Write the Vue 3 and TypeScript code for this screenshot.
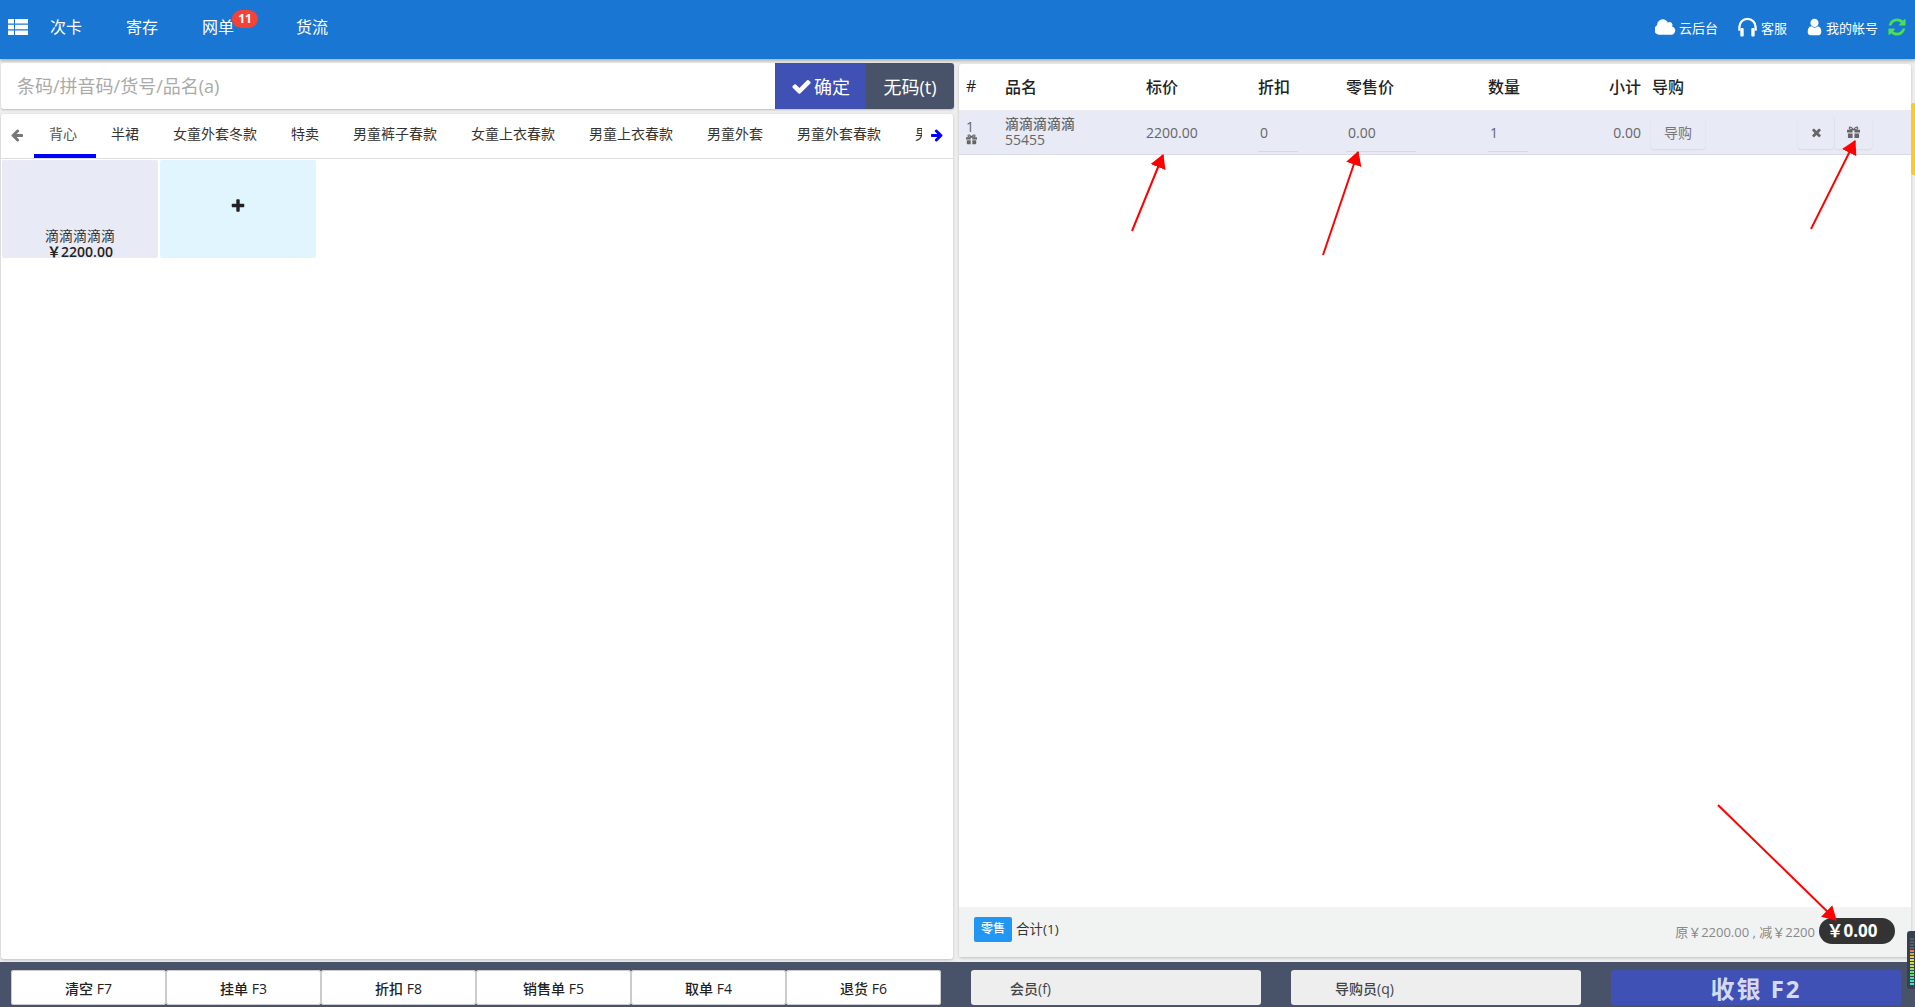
<script setup lang="ts">
const icons: Record<string, { box: string; d: string }> = {
  check: { box: '0 0 1792 1792', d: 'M1671 566q0 40-28 68l-724 724-136 136q-28 28-68 28t-68-28l-136-136-362-362q-28-28-28-68t28-68l136-136q28-28 68-28t68 28l294 295 656-657q28-28 68-28t68 28l136 136q28 28 28 68z' },
  times: { box: '0 0 1792 1792', d: 'M1490 1322q0 40-28 68l-136 136q-28 28-68 28t-68-28l-294-294-294 294q-28 28-68 28t-68-28l-136-136q-28-28-28-68t28-68l294-294-294-294q-28-28-28-68t28-68l136-136q28-28 68-28t68 28l294 294 294-294q28-28 68-28t68 28l136 136q28 28 28 68t-28 68l-294 294 294 294q28 28 28 68z' },
  plus: { box: '0 0 1792 1792', d: 'M1600 736v192q0 40-28 68t-68 28h-416v416q0 40-28 68t-68 28h-192q-40 0-68-28t-28-68v-416h-416q-40 0-68-28t-28-68v-192q0-40 28-68t68-28h416v-416q0-40 28-68t68-28h192q40 0 68 28t28 68v416h416q40 0 68 28t28 68z' },
  left: { box: '0 0 1792 1792', d: 'M1664 896v128q0 53-32.500 90.500t-84.500 37.500h-704l293 294q38 36 38 90t-38 90l-75 76q-37 37-90 37-52 0-91-37l-651-652q-37-37-37-90 0-52 37-91l651-650q38-38 91-38 52 0 90 38l75 74q38 38 38 91t-38 91l-293 293h704q52 0 84.500 37.500t32.500 90.500z' },
  right: { box: '0 0 1792 1792', d: 'M1600 960q0 54-37 91l-651 651q-39 37-91 37-51 0-90-37l-75-75q-38-38-38-91t38-91l293-293h-704q-52 0-84.500-37.500t-32.500-90.500v-128q0-53 32.500-90.500t84.500-37.500h704l-293-294q-38-36-38-90t38-90l75-75q38-38 90-38 53 0 91 38l651 651q37 35 37 90z' },
  user: { box: '0 0 1792 1792', d: 'M1536 1399q0 109-62.500 187t-150.500 78h-854q-88 0-150.500-78t-62.500-187q0-85 8.500-160.500t31.500-152 58.500-131 94-89 134.500-34.500q131 128 313 128t313-128q76 0 134.500 34.500t94 89 58.500 131 31.500 152 8.500 160.500zm-256-887q0 159-112.500 271.500t-271.500 112.500-271.500-112.500-112.500-271.500 112.500-271.500 271.500-112.500 271.500 112.500 112.500 271.500z' },
  cloud: { box: '0 0 1920 1792', d: 'M1856 1216q0 159-112.500 271.500t-271.500 112.500h-1088q-185 0-316.500-131.500t-131.500-316.500q0-132 71-241.500t187-163.500q-2-28-2-43 0-212 150-362t362-150q158 0 286.500 88t187.500 230q70-62 166-62 106 0 181 75t75 181q0 75-41 138 129 30 213 134.500t84 239.500z' },
  refresh: { box: '0 0 1792 1792', d: 'M1639 1056q0 5-1 7-64 268-268 434.500t-478 166.500q-146 0-282.500-55t-243.500-157l-129 129q-19 19-45 19t-45-19-19-45v-448q0-26 19-45t45-19h448q26 0 45 19t19 45-19 45l-137 137q71 66 161 102t187 36q134 0 250-65t186-179q11-17 53-117 8-23 30-23h192q13 0 22.500 9.500t9.500 22.500zm25-800v448q0 26-19 45t-45 19h-448q-26 0-45-19t-19-45 19-45l138-138q-148-137-349-137-134 0-250 65t-186 179q-11 17-53 117-8 23-30 23h-199q-13 0-22.500-9.500t-9.500-22.500v-7q65-268 270-434.500t480-166.500q146 0 284 55.500t245 156.500l130-129q19-19 45-19t45 19 19 45z' },
}
const giftBody = 'M0 4h6v3H0zM8 4h6v3H8zM1 8h5v5H2a1 1 0 0 1-1-1zM8 8h5v4a1 1 0 0 1-1 1H8z'
const giftBow = 'M7 4C5 1 3 .5 2.500 2S4 4 7 4C10 4 12 3.500 11.500 2S9 1 7 4z'
const tabs = ['半裙', '女童外套冬款', '特卖', '男童裤子春款', '女童上衣春款', '男童上衣春款', '男童外套', '男童外套春款', '男童裤子']
const fnKeys = ['清空 F7', '挂单 F3', '折扣 F8', '销售单 F5', '取单 F4', '退货 F6']
const arrows = [
  { x1: 1132, y1: 231, x2: 1163, y2: 155 },
  { x1: 1323, y1: 255, x2: 1358, y2: 152 },
  { x1: 1811, y1: 229, x2: 1855, y2: 141 },
  { x1: 1718, y1: 805, x2: 1836, y2: 920 },
]
const meter = ['#555b66', '#555b66', '#555b66', '#5a606b', '#e8843a', '#e8a03a', '#e8c83a', '#e0dc3a', '#d0e040', '#b8e04a', '#98e05a', '#78e06a', '#58e08a', '#48e0a8', '#40e0c0', '#40e0c8']
</script>

<template>
  <div class="pos">
    <header class="topbar">
      <svg class="menu-icon" viewBox="0 0 20 16"><path d="M0 0h6v4.500H0zM7 0h13v4.500H7zM0 5.800h6v4.400H0zM7 5.800h13v4.400H7zM0 11.500h6V16H0zM7 11.500h13V16H7z" /></svg>
      <nav class="nav">
        <a class="nav-item">次卡</a>
        <a class="nav-item">寄存</a>
        <a class="nav-item with-badge">网单<span class="badge">11</span></a>
        <a class="nav-item">货流</a>
      </nav>
      <div class="tools">
        <span class="tool"><svg class="ti-cloud" :viewBox="icons.cloud.box"><path :d="icons.cloud.d" /></svg>云后台</span>
        <span class="tool"><svg class="ti-head" viewBox="0 0 22 20"><path class="phones" d="M2.500 14V10a8.500 8.500 0 0 1 17 0v4" /><rect x="3.500" y="11" width="3.500" height="9" rx="1" /><rect x="15" y="11" width="3.500" height="9" rx="1" /></svg>客服</span>
        <span class="tool"><svg class="ti-user" :viewBox="icons.user.box"><path :d="icons.user.d" /></svg>我的帐号</span>
        <svg class="ti-sync" :viewBox="icons.refresh.box"><path :d="icons.refresh.d" /></svg>
      </div>
    </header>

    <main class="main">
      <section class="left">
        <div class="search">
          <div class="search-input">条码/拼音码/货号/品名(a)</div>
          <button class="btn-ok"><svg :viewBox="icons.check.box"><path :d="icons.check.d" /></svg>确定</button>
          <button class="btn-nocode">无码(t)</button>
        </div>
        <div class="catalog">
          <div class="tabs">
            <svg class="tab-prev" :viewBox="icons.left.box"><path :d="icons.left.d" /></svg>
            <div class="tab-strip">
              <span class="tab active">背心</span>
              <span v-for="t in tabs" :key="t" class="tab">{{ t }}</span>
            </div>
            <svg class="tab-next" :viewBox="icons.right.box"><path :d="icons.right.d" /></svg>
          </div>
          <div class="goods">
            <div class="good">
              <span class="good-name">滴滴滴滴滴</span>
              <span class="good-price">￥2200.00</span>
            </div>
            <div class="good add"><svg :viewBox="icons.plus.box"><path :d="icons.plus.d" /></svg></div>
          </div>
        </div>
      </section>

      <section class="right">
        <div class="cart-row cart-head">
          <span>#</span><span>品名</span><span>标价</span><span>折扣</span><span>零售价</span><span>数量</span><span class="r">小计</span><span class="guide-h">导购</span><span></span>
        </div>
        <div class="cart-row cart-item">
          <span class="no">1<svg viewBox="0 0 14 14"><path :d="giftBody" /><path class="bow" :d="giftBow" /></svg></span>
          <span class="name">滴滴滴滴滴<br />55455</span>
          <span>2200.00</span>
          <span class="field w40">0</span>
          <span class="field w70">0.00</span>
          <span class="field w40">1</span>
          <span class="r">0.00</span>
          <span class="guide"><button class="chip guide-btn">导购</button></span>
          <span class="acts">
            <button class="chip act act-x"><svg :viewBox="icons.times.box"><path :d="icons.times.d" /></svg></button>
            <button class="chip act"><svg viewBox="0 0 14 14"><path :d="giftBody" /><path class="bow" :d="giftBow" /></svg></button>
          </span>
        </div>
        <div class="cart-space"></div>
        <div class="summary">
          <span class="tag">零售</span>
          <span class="count">合计(1)</span>
          <span class="calc">原￥2200.00 , 减￥2200</span>
          <span class="total">￥0.00</span>
        </div>
      </section>
    </main>

    <footer class="bottom">
      <div class="fn-group">
        <button v-for="k in fnKeys" :key="k" class="fn">{{ k }}</button>
      </div>
      <button class="pick pick-member">会员(f)</button>
      <button class="pick pick-guide">导购员(q)</button>
      <button class="pay">收银 F2</button>
    </footer>

    <div class="side-tab"></div>
    <div class="meter"><i v-for="(c, i) in meter" :key="i" :style="{ background: c }"></i></div>

    <svg class="marks" viewBox="0 0 1915 1007">
      <defs>
        <marker id="head" markerWidth="7" markerHeight="8" refX="6.500" refY="4" orient="auto" markerUnits="strokeWidth">
          <path d="M0 0L7 4L0 8z" fill="#f00" />
        </marker>
      </defs>
      <line v-for="(a, i) in arrows" :key="i" :x1="a.x1" :y1="a.y1" :x2="a.x2" :y2="a.y2" stroke="#f00" stroke-width="2" marker-end="url(#head)" />
    </svg>
  </div>
</template>

<style>
html, body { margin: 0; background: #eee; }
</style>

<style scoped>
.pos {
  position: relative;
  width: 1915px;
  height: 1007px;
  display: flex;
  flex-direction: column;
  overflow: hidden;
  background: #eee;
  color: #333;
  font-family: "Open Sans", "Noto Sans CJK SC", sans-serif;
  font-size: 14px;
}
button { font-family: inherit; border: 0; padding: 0; }
svg { fill: currentColor; display: block; }

.topbar {
  flex: 0 0 59px;
  box-sizing: border-box;
  display: flex;
  align-items: center;
  padding: 0 8px 5px 8px;
  background: #1976d2;
  color: #fff;
  box-shadow: 0 2px 3px rgba(0,0,0,.25);
  z-index: 2;
}
.menu-icon { width: 20px; height: 16px; }
.nav { display: flex; margin-left: 22px; }
.nav-item { position: relative; width: 76px; font-size: 16px; line-height: 24px; }
.nav-item.with-badge { width: 94px; }
.badge {
  position: absolute;
  left: 30px;
  top: -5px;
  width: 26px;
  height: 18px;
  border-radius: 9px;
  background: #f44336;
  font-size: 12px;
  font-weight: 700;
  line-height: 17px;
  text-align: center;
}
.tools { margin-left: auto; display: flex; align-items: center; font-size: 13px; }
.tool { display: flex; align-items: center; margin-right: 18px; }
.tool:first-child { margin-right: 19px; }
.ti-cloud { width: 21px; height: 20px; margin-right: 3px; }
.ti-head { width: 21px; height: 20px; margin-right: 3px; }
.phones { fill: none; stroke: #fff; stroke-width: 2.400; }
.ti-user { width: 19px; height: 20px; margin-right: 2px; }
.tool:nth-child(3) { margin-right: 9px; }
.ti-sync { width: 20px; height: 20px; color: #4ae24a; }

.main { flex: 1; min-height: 0; display: flex; gap: 5px; padding: 4px 4px 0 1px; }
.left { width: 953px; display: flex; flex-direction: column; }
.search {
  flex: 0 0 46px;
  display: flex;
  background: #fff;
  border-radius: 3px;
  overflow: hidden;
  box-shadow: 0 1px 2px rgba(0,0,0,.2);
}
.search-input { flex: 1; padding-left: 16px; font-size: 18px; line-height: 47px; color: #aaa; }
.btn-ok, .btn-nocode { height: 46px; color: #fff; font-size: 18px; display: flex; align-items: center; justify-content: center; }
.btn-ok { width: 91px; background: #3f51b5; }
.btn-ok svg { width: 21px; height: 21px; margin-right: 2px; }
.btn-nocode { width: 88px; background: #485269; }
.catalog {
  flex: 1;
  margin: 5px 1px 3px 0;
  background: #fff;
  border-radius: 3px;
  box-shadow: 0 1px 3px rgba(0,0,0,.2);
}
.tabs { position: relative; height: 44px; display: flex; align-items: stretch; border-bottom: 1px solid #ddd; }
.tab-prev { position: absolute; left: 9px; top: 14px; width: 14px; height: 14px; color: #777; }
.tab-next { position: absolute; right: 9px; top: 14px; width: 14px; height: 14px; color: #00f; }
.tab-strip { margin-left: 33px; width: 888px; display: flex; overflow: hidden; }
.tab { flex: none; padding: 0 19px 0 15px; font-size: 14px; line-height: 40px; height: 44px; box-sizing: border-box; white-space: nowrap; color: #333; }
.tab.active { color: #555; border-bottom: 4px solid #00f; }
.goods { display: flex; gap: 2px; padding: 1px 1px; }
.good {
  width: 156px;
  height: 98px;
  background: #e8eaf6;
  border-radius: 2px;
  display: flex;
  flex-direction: column;
  align-items: center;
  justify-content: flex-end;
}
.good-name { font-size: 14px; line-height: 17px; color: #333; }
.good-price { font-size: 14px; font-weight: 600; line-height: 16px; margin-bottom: -2px; color: #222; }
.good.add { background: #e1f5fe; justify-content: center; color: #222; padding-bottom: 6px; box-sizing: border-box; }
.add svg { width: 16px; height: 16px; }

.right {
  flex: 1;
  display: flex;
  flex-direction: column;
  margin: 1px 0 5px;
  background: #fff;
  border-radius: 3px;
  box-shadow: 0 1px 3px rgba(0,0,0,.2);
}
.cart-row {
  display: grid;
  grid-template-columns: 46px 141px 112px 88px 142px 80px 73px 157px 1fr;
  align-items: center;
}
.cart-row > span:first-child { padding-left: 7px; }
.cart-head { height: 46px; box-sizing: border-box; padding-bottom: 2px; font-size: 16px; font-weight: 500; color: #222; }
.guide-h { padding-left: 11px; }
.r { text-align: right; }
.cart-item { height: 45px; box-sizing: border-box; background: #e8eaf6; border-bottom: 1px solid #d8dae4; color: #666; font-size: 14px; font-weight: 500; }
.no { line-height: 15px; }
.no svg { width: 11px; height: 11px; }
.bow { fill: none; stroke: currentColor; stroke-width: 1.300; }
.name { font-size: 14px; line-height: 16px; }
.field { border-bottom: 1px solid #d5d8e6; height: 38px; line-height: 38px; margin-top: 2px; padding-left: 2px; box-sizing: border-box; }
.w40 { width: 40px; }
.w70 { width: 70px; }
.guide { padding-left: 10px; }
.chip { background: #e8eaf6; border-radius: 3px; box-shadow: 0 1px 2px rgba(0,0,0,.08); color: #777; height: 33px; }
.guide-btn { width: 54px; font-size: 14px; }
.acts { display: flex; gap: 1px; }
.act { width: 37px; display: flex; align-items: center; justify-content: center; }
.act-x { width: 36px; }
.act svg { width: 13px; height: 13px; color: #666; }
.cart-space { flex: 1; }
.summary {
  height: 50px;
  display: flex;
  align-items: flex-start;
  padding: 0 16px 0 15px;
  background: #f1f3f3;
  box-sizing: border-box;
}
.tag {
  margin-top: 10px;
  width: 38px;
  height: 25px;
  line-height: 24px;
  border-radius: 2px;
  background: #2196f3;
  color: #fff;
  font-size: 12px;
  font-weight: 500;
  text-align: center;
}
.count { margin: 10px 0 0 4px; font-size: 13.500px; line-height: 24px; }
.calc { margin: 13px 4px 0 auto; font-size: 13px; line-height: 24px; color: #888; }
.total {
  margin-top: 11px;
  width: 76px;
  height: 26px;
  box-sizing: border-box;
  padding-right: 10px;
  border-radius: 13px;
  background: #333;
  color: #fff;
  font-size: 17px;
  font-weight: 700;
  line-height: 26px;
  text-align: center;
}

.bottom {
  flex: 0 0 44px;
  display: flex;
  gap: 30px;
  padding: 8px 14px 2px 11px;
  box-sizing: border-box;
  background: #485269;
}
.fn-group { display: flex; width: 930px; }
.fn { flex: 1; background: #fff; color: #222; font-size: 14px; font-weight: 500; border-radius: 3px; box-shadow: inset 0 0 0 1px #ccc; }
.pick { width: 290px; background: #eee; color: #444; font-size: 14px; font-weight: 500; border-radius: 3px; text-align: left; padding-left: 39px; }
.pick-guide { padding-left: 44px; }
.pay { width: 290px; background: #3f51b5; color: #d5d9f2; font-size: 24px; font-weight: 700; border-radius: 3px; letter-spacing: 2px; }

.side-tab { position: absolute; right: 0; top: 103px; width: 4px; height: 72px; background: #f5c842; border-radius: 2px 0 0 2px; }
.meter {
  position: absolute;
  right: 0;
  top: 931px;
  width: 8px;
  height: 58px;
  padding: 7px 1px 4px 3px;
  box-sizing: border-box;
  background: #37404f;
  border-radius: 3px 0 0 3px;
  display: flex;
  flex-direction: column;
  justify-content: space-between;
}
.meter i { display: block; height: 2px; }
.marks { position: absolute; inset: 0; width: 1915px; height: 1007px; pointer-events: none; z-index: 5; }
</style>
